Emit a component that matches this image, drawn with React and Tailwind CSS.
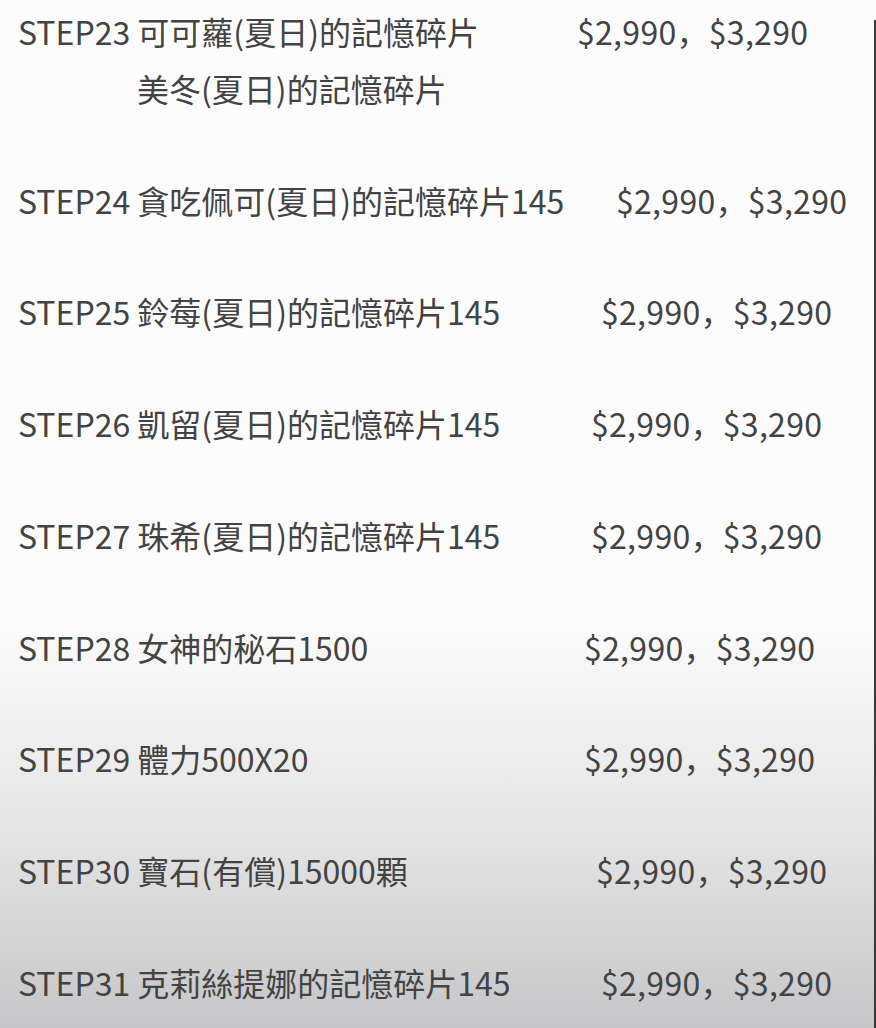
const rows = [
  { name: ["STEP23 可可蘿(夏日)的記憶碎片", "美冬(夏日)的記憶碎片"], col: "w-[559px]" },
  { name: ["STEP24 貪吃佩可(夏日)的記憶碎片145"], col: "w-[598px]" },
  { name: ["STEP25 鈴莓(夏日)的記憶碎片145"], col: "w-[583px]" },
  { name: ["STEP26 凱留(夏日)的記憶碎片145"], col: "w-[573px]" },
  { name: ["STEP27 珠希(夏日)的記憶碎片145"], col: "w-[573px]" },
  { name: ["STEP28 女神的秘石1500"], col: "w-[566px]" },
  { name: ["STEP29 體力500X20"], col: "w-[566px]" },
  { name: ["STEP30 寶石(有償)15000顆"], col: "w-[578px]" },
  { name: ["STEP31 克莉絲提娜的記憶碎片145"], col: "w-[583px]" },
];

export default function App() {
  return (
    <div
      className="relative w-[876px] h-[1028px] overflow-hidden bg-linear-to-b from-[#fcfcfd] from-60% via-[#e6e6e7] via-80% to-[#c6c6c8] text-[#434343]"
      style={{ fontFamily: '"Noto Sans CJK SC", "Noto Sans", sans-serif' }}
    >
      <div className="flex flex-col gap-[55px] pt-[3px] pl-[18px] text-[32px] leading-[56.75px]">
        {rows.map((row, i) => (
          <div key={i} className="flex">
            <div className={row.col + " shrink-0"}>
              <div className="whitespace-nowrap">{row.name[0]}</div>
              {row.name[1] && <div className="pl-[119px] whitespace-nowrap">{row.name[1]}</div>}
            </div>
            <div className="whitespace-nowrap tracking-[0.3px]">$2,990，$3,290</div>
          </div>
        ))}
      </div>
      <div className="absolute right-0 top-[20px] bottom-0 w-[2px] bg-[#3a3a3a]" />
    </div>
  );
}
